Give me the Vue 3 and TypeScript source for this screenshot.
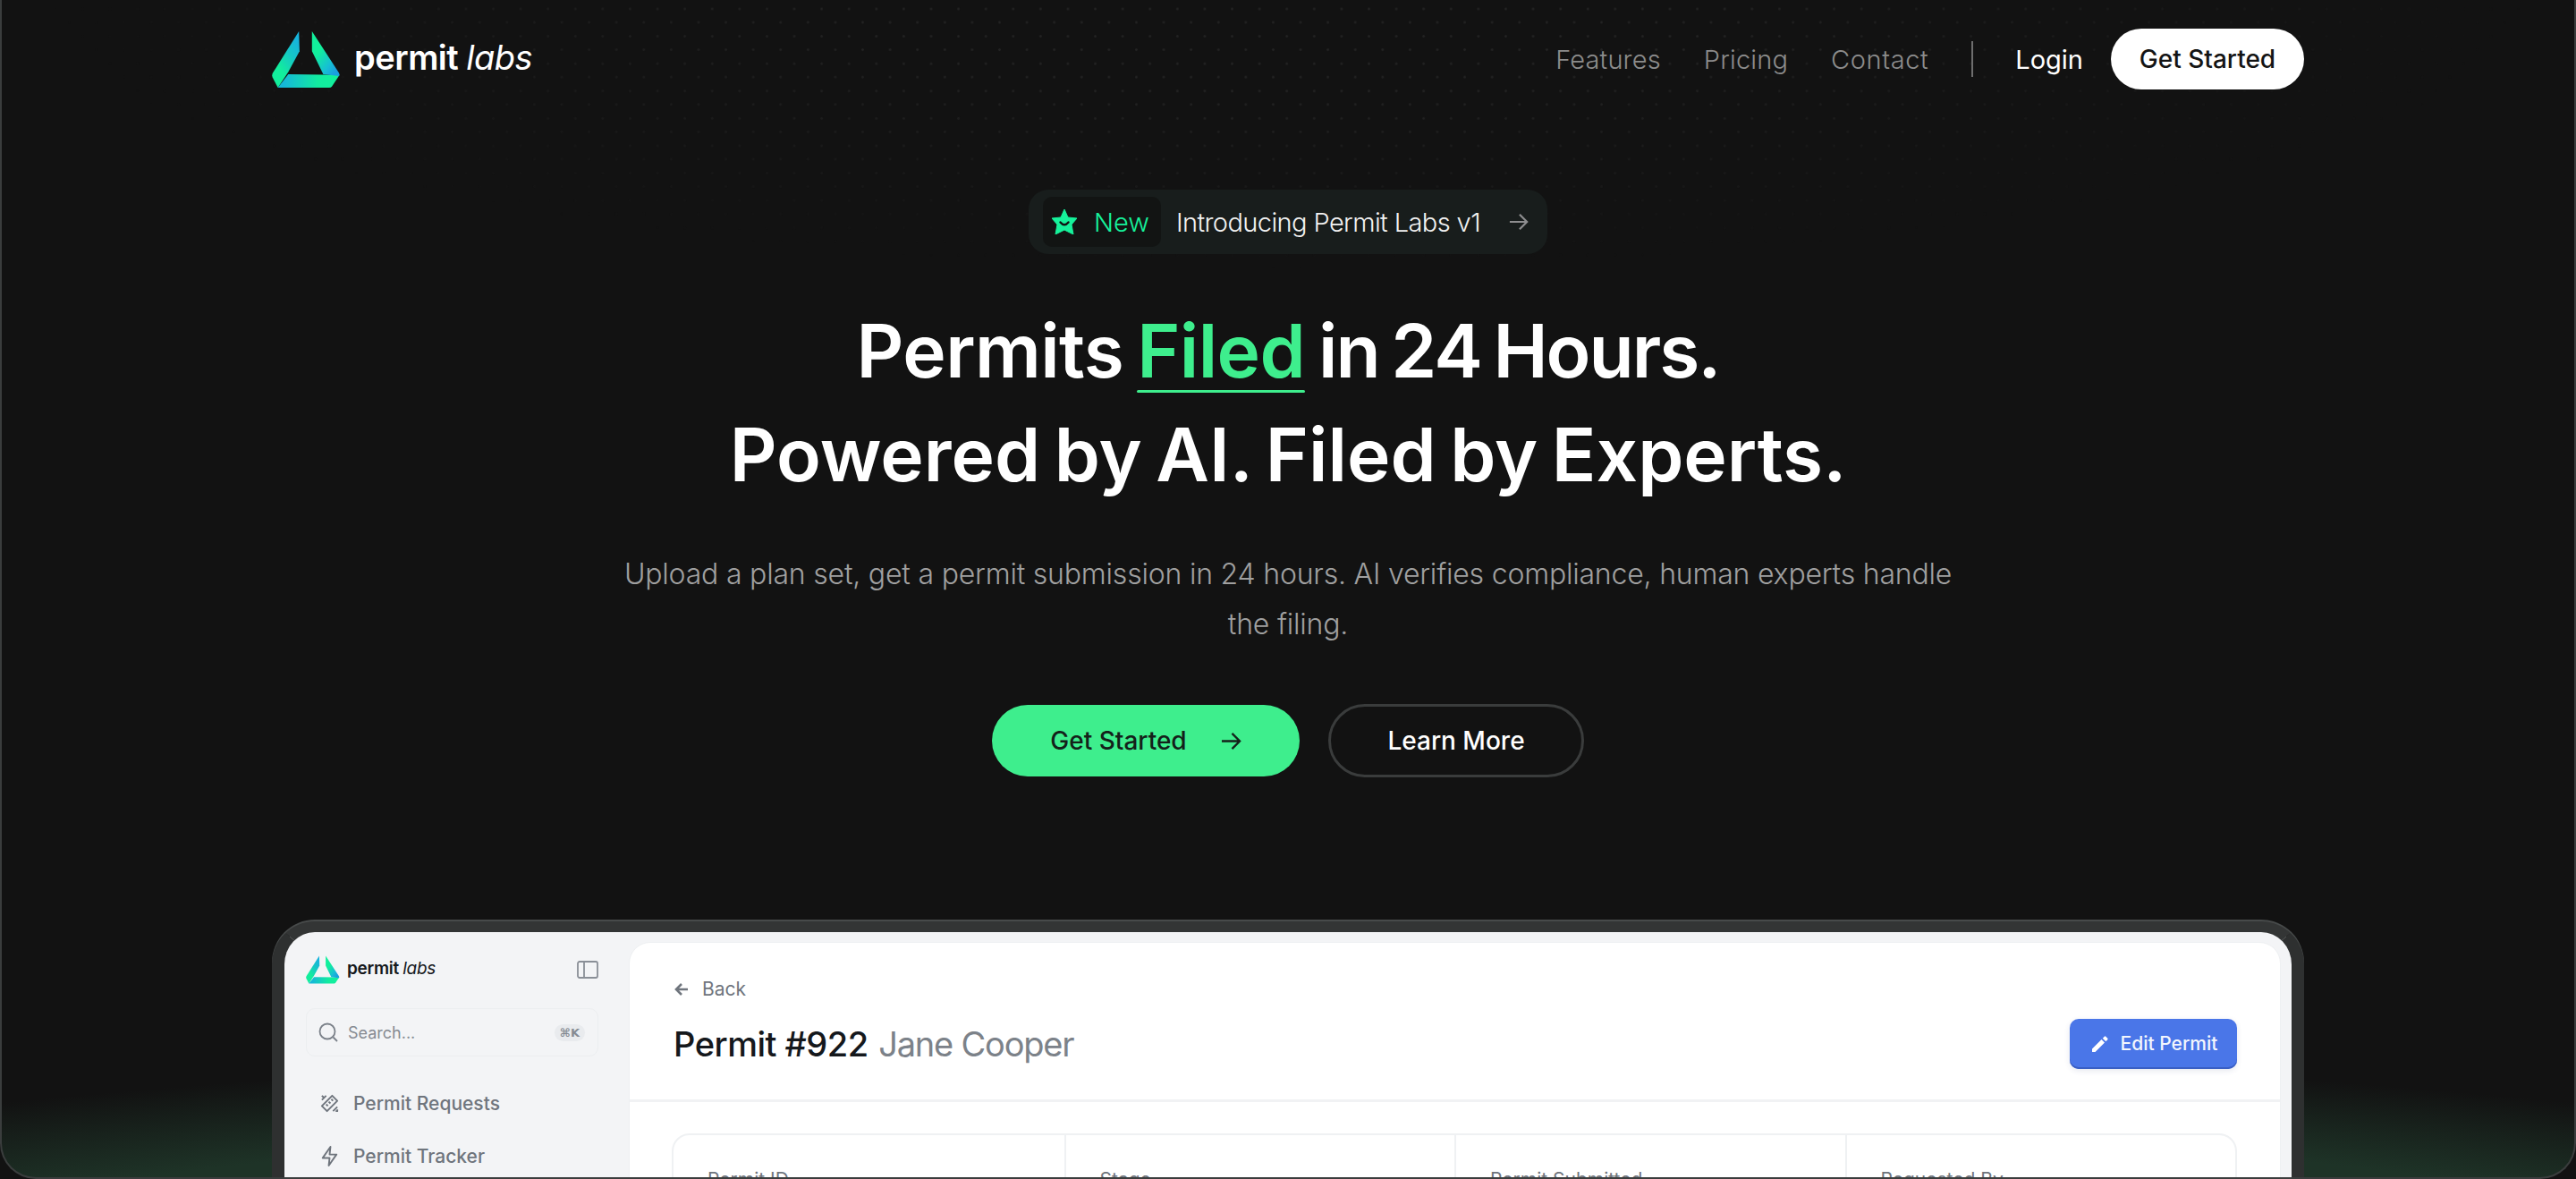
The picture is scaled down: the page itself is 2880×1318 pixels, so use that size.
<script setup lang="ts">
const navLinks = ['Features', 'Pricing', 'Contact'];
const permitFields = ['Permit ID', 'Stage', 'Permit Submitted', 'Requested By'];
</script>

<template>
  <div class="frame">
    <div class="dots"></div>

    <header class="nav">
      <a class="brand">
        <svg class="brand-mark" viewBox="72 100 232 196">
          <defs>
            <linearGradient id="armL" x1="0.75" y1="0.05" x2="0.2" y2="0.85">
              <stop offset="0" stop-color="#17b4dc" />
              <stop offset="0.35" stop-color="#15c6c6" />
              <stop offset="0.8" stop-color="#12ee9c" />
            </linearGradient>
            <linearGradient id="armB" x1="0" y1="0.5" x2="1" y2="0.5">
              <stop offset="0.1" stop-color="#15b8d8" />
              <stop offset="0.65" stop-color="#12ec9f" />
              <stop offset="1" stop-color="#12f09b" />
            </linearGradient>
            <linearGradient id="armR" x1="0.2" y1="0.1" x2="0.85" y2="0.9">
              <stop offset="0.3" stop-color="#12ef9c" />
              <stop offset="0.75" stop-color="#16bfd4" />
              <stop offset="1" stop-color="#1a9fe0" />
            </linearGradient>
          </defs>
          <path d="M163 103 L165 170 L127 240 L92 293 L74 258 Q71 250 75 243 Z" fill="url(#armL)" />
          <path d="M127 248 L300 250 L274 289 Q271 293 265 293 L92 293 Z" fill="url(#armB)" />
          <path d="M207 103 L298 243 Q302 249 298 254 L245 248 L207 170 Z" fill="url(#armR)" />
        </svg>
        <span class="brand-text">permit <em>labs</em></span>
      </a>

      <nav class="nav-right">
        <a v-for="link in navLinks" :key="link" class="nav-link">{{ link }}</a>
        <span class="nav-divider"></span>
        <a class="nav-login">Login</a>
        <a class="nav-cta">Get Started</a>
      </nav>
    </header>

    <section class="hero">
      <div class="announce">
        <span class="announce-tag">
          <svg class="star" viewBox="0 0 28 28">
            <path d="M14 0 L18 9 L28 10 L22 17 L24 28 L14 23 L4 28 L6 17 L0 10 L10 9 Z" fill="#16f29b" stroke="#16f29b" stroke-width="1" stroke-linejoin="round" />
            <path d="M9.5 14.5 Q14 20 18.5 14.5" fill="none" stroke="#101312" stroke-width="2.4" stroke-linecap="round" />
          </svg>
          New
        </span>
        <span class="announce-text">Introducing Permit Labs v1</span>
        <svg class="announce-arrow" viewBox="0 0 24 24">
          <path d="M1 12 H22 M13 3 L22 12 L13 21" />
        </svg>
      </div>

      <h1 class="title">
        Permits <span class="filed">Filed</span> <span class="tight">in 24 Hours.</span><br />
        <span class="wide">Powered by AI. Filed by Experts.</span>
      </h1>

      <p class="lead">
        Upload a plan set, get a permit submission in 24 hours. AI verifies compliance, human experts handle the filing.
      </p>

      <div class="actions">
        <a class="btn btn-green">
          Get Started
          <svg class="btn-arrow" viewBox="0 0 24 24">
            <path d="M1 12 H22 M13 3 L22 12 L13 21" />
          </svg>
        </a>
        <a class="btn btn-outline">Learn More</a>
      </div>
    </section>

    <section class="mock">
      <aside class="side">
        <div class="side-top">
          <div class="side-brand">
            <svg class="side-mark" viewBox="72 100 232 196">
              <path d="M163 103 L165 170 L127 240 L92 293 L74 258 Q71 250 75 243 Z" fill="url(#armL)" />
              <path d="M127 248 L300 250 L274 289 Q271 293 265 293 L92 293 Z" fill="url(#armB)" />
              <path d="M207 103 L298 243 Q302 249 298 254 L245 248 L207 170 Z" fill="url(#armR)" />
            </svg>
            <span class="side-brand-text">permit <em>labs</em></span>
          </div>
          <svg class="panel-icon" viewBox="0 0 24 20">
            <rect x="1" y="1" width="22" height="18" rx="2" />
            <path d="M8 1 V19" />
          </svg>
        </div>

        <div class="search">
          <svg class="search-icon" viewBox="0 0 22 22">
            <circle cx="10" cy="10" r="8.5" />
            <path d="M16.5 16.5 L21 21" />
          </svg>
          <span class="search-text">Search...</span>
          <span class="search-key">⌘K</span>
        </div>

        <a class="side-link">
          <svg class="side-icon" viewBox="0 0 24 24">
            <path d="M3 15 L15 3 L21 9 L9 21 Z M8 13 L10 15 M11 10 L13 12 M14 7 L16 9" />
            <path d="M3 8 L8 3 M3 3 L5 5 M16 21 L21 16 M19 21 H21 V19" />
          </svg>
          Permit Requests
        </a>
        <a class="side-link">
          <svg class="side-icon" viewBox="0 0 24 24">
            <path d="M13 1 L4 14 H12 L11 23 L20 10 H12 Z" />
          </svg>
          Permit Tracker
        </a>
      </aside>

      <main class="panel">
        <div class="panel-head">
          <div>
            <a class="back">
              <svg class="back-icon" viewBox="0 0 18 18">
                <path d="M16 9 H3 M9 3 L3 9 L9 15" />
              </svg>
              Back
            </a>
            <h2 class="permit-title">Permit #922 <span>Jane Cooper</span></h2>
          </div>
          <a class="edit-btn">
            <svg class="edit-icon" viewBox="0 0 24 24">
              <path d="M3 17.5 V21 H6.5 L17 10.5 L13.5 7 Z M14.8 5.7 L18.3 9.2 L20.3 7.2 Q21 6.5 20.3 5.7 L18.3 3.7 Q17.5 3 16.8 3.7 Z" />
            </svg>
            Edit Permit
          </a>
        </div>

        <div class="panel-body">
          <div class="fields">
            <div v-for="field in permitFields" :key="field" class="field">{{ field }}</div>
          </div>
        </div>
      </main>
    </section>
  </div>
</template>

<style>
html,
body {
  margin: 0;
  background: #121212;
}
</style>

<style scoped>
.frame {
  position: relative;
  box-sizing: border-box;
  height: 1318px;
  overflow: hidden;
  border: solid #3a3d3d;
  border-width: 0 2px 2px;
  border-radius: 0 0 40px 40px;
  font-family: Inter, "Liberation Sans", sans-serif;
  background: radial-gradient(2400px 320px at 1438px 1489px, #1e3327 76%, #121212 100%);
}

.dots {
  position: absolute;
  inset: 0 0 auto;
  height: 320px;
  background-image:
    radial-gradient(circle, #222 1.1px, transparent 1.7px),
    radial-gradient(circle, #222 1.1px, transparent 1.7px);
  background-size: 30.6px 30.6px;
  background-position: -16.5px -5.3px, -1.2px 9.7px;
  -webkit-mask-image: radial-gradient(1380px 300px at 50% 0, #000 35%, transparent 100%);
  mask-image: radial-gradient(1380px 300px at 50% 0, #000 35%, transparent 100%);
}

a {
  text-decoration: none;
}

.nav {
  position: relative;
  display: flex;
  align-items: center;
  justify-content: space-between;
  width: 2272px;
  margin: 0 auto;
  padding-top: 32px;
}

.brand {
  display: flex;
  align-items: center;
  gap: 15px;
}

.brand-mark {
  width: 77px;
  height: 65px;
}

.brand-text {
  margin-top: -4px;
  font-size: 38px;
  font-weight: 600;
  letter-spacing: -0.5px;
  color: #fff;
}

.brand-text em {
  font-weight: 400;
}

.nav-right {
  display: flex;
  align-items: center;
}

.nav-link {
  margin-right: 48px;
  font-size: 29px;
  font-weight: 300;
  letter-spacing: 0.15px;
  color: #8c8c8c;
}

.nav-link:nth-child(3) {
  letter-spacing: 0.6px;
}

.nav-divider {
  width: 2px;
  height: 40px;
  margin-right: 47px;
  background: #6e6e6e;
}

.nav-login {
  margin-right: 31px;
  font-size: 29px;
  font-weight: 400;
  color: #fff;
}

.nav-cta {
  display: flex;
  align-items: center;
  justify-content: center;
  width: 216px;
  height: 68px;
  border-radius: 34px;
  background: #fff;
  font-size: 28px;
  font-weight: 500;
  color: #141414;
}

.hero {
  position: relative;
  display: flex;
  flex-direction: column;
  align-items: center;
}

.announce {
  display: flex;
  align-items: center;
  box-sizing: border-box;
  width: 580px;
  height: 72px;
  margin-top: 112px;
  padding: 0 21px 0 16px;
  border-radius: 22px;
  background: #181d1c;
}

.announce-tag {
  display: flex;
  align-items: center;
  gap: 19px;
  box-sizing: border-box;
  width: 132px;
  height: 56px;
  padding-left: 10px;
  border-radius: 10px;
  background: #121413;
  font-size: 29px;
  font-weight: 300;
  color: #16f29b;
}

.star {
  width: 28px;
  height: 28px;
}

.announce-text {
  margin-left: 17px;
  font-size: 29px;
  font-weight: 300;
  letter-spacing: -0.6px;
  color: #f2f2f2;
  white-space: nowrap;
}

.announce-arrow {
  width: 22px;
  height: 22px;
  margin-left: auto;
  fill: none;
  stroke: #8d8d8f;
  stroke-width: 2.4;
}

.title {
  margin: 51px 0 0;
  font-size: 82px;
  font-weight: 600;
  line-height: 116px;
  letter-spacing: -0.6px;
  word-spacing: -5px;
  text-align: center;
  color: #fff;
}

.tight {
  letter-spacing: -2px;
}

.wide {
  letter-spacing: 0;
}

.filed {
  position: relative;
  color: #3eee8d;
}

.filed::after {
  content: "";
  position: absolute;
  left: 0;
  right: 0;
  bottom: 3px;
  height: 3px;
  border-radius: 2px;
  background: #3eee8d;
}

.lead {
  width: 1510px;
  margin: 47px 0 0;
  font-size: 32px;
  font-weight: 300;
  line-height: 56px;
  letter-spacing: -0.2px;
  text-align: center;
  color: #a0a0a0;
}

.actions {
  display: flex;
  gap: 32px;
  margin-top: 62px;
}

.btn {
  display: flex;
  align-items: center;
  justify-content: center;
  box-sizing: border-box;
  height: 80px;
  border-radius: 40px;
  font-size: 28px;
  font-weight: 500;
}

.btn-green {
  gap: 38px;
  width: 344px;
  background: #3eee8d;
  color: #14211a;
}

.btn-arrow {
  width: 23px;
  height: 23px;
  fill: none;
  stroke: #14211a;
  stroke-width: 2.4;
}

.btn-outline {
  width: 286px;
  height: 82px;
  margin-top: -1px;
  border: 3px solid #3a3c3c;
  border-radius: 41px;
  color: #fff;
}

.mock {
  position: relative;
  display: flex;
  box-sizing: border-box;
  width: 2272px;
  height: 400px;
  margin: 161px auto 0;
  border: 14px solid #2e3030;
  border-top-width: 12px;
  border-top-color: #333535;
  border-radius: 48px 48px 0 0;
  background: #f3f4f6;
  box-shadow: 0 -2px 0 #474a4a;
}

.side {
  flex: 0 0 385px;
  box-sizing: border-box;
  padding: 26px 24px 0 24px;
}

.side-top {
  display: flex;
  align-items: center;
  justify-content: space-between;
}

.side-brand {
  display: flex;
  align-items: center;
  gap: 8px;
}

.side-mark {
  width: 38px;
  height: 32px;
}

.side-brand-text {
  margin-top: -3px;
  font-size: 19px;
  font-weight: 600;
  letter-spacing: -0.3px;
  color: #15181c;
}

.side-brand-text em {
  font-weight: 400;
}

.panel-icon {
  width: 24px;
  height: 20px;
  margin-right: 10px;
  fill: none;
  stroke: #8a8f97;
  stroke-width: 1.8;
}

.search {
  display: flex;
  align-items: center;
  box-sizing: border-box;
  width: 327px;
  height: 54px;
  margin-top: 27px;
  padding: 0 14px 0 13px;
  border: 1px solid #eceef0;
  border-radius: 10px;
}

.search-icon {
  width: 22px;
  height: 22px;
  fill: none;
  stroke: #7b8189;
  stroke-width: 1.8;
}

.search-text {
  margin-left: 11px;
  font-size: 18px;
  color: #868b93;
}

.search-key {
  margin-left: auto;
  padding: 2px 6px;
  border-radius: 10px;
  background: #e9ebee;
  font-family: "DejaVu Sans", sans-serif;
  font-size: 13px;
  font-weight: 700;
  color: #868b93;
}

.side-link {
  display: flex;
  align-items: center;
  gap: 15px;
  height: 32px;
  margin: 36px 0 0 15px;
  font-size: 21px;
  font-weight: 500;
  color: #6f757d;
}

.side-link + .side-link {
  margin-top: 27px;
}

.side-icon {
  width: 23px;
  height: 23px;
  fill: none;
  stroke: #6f757d;
  stroke-width: 2;
  stroke-linejoin: round;
}

.panel {
  flex: 1;
  margin: 11px 12px 0 0;
  border: 1px solid #eef0f2;
  border-radius: 24px 24px 0 0;
  background: #fff;
}

.panel-head {
  display: flex;
  align-items: center;
  justify-content: space-between;
  box-sizing: border-box;
  height: 178px;
  padding: 0 48px 0 49px;
  border-bottom: 3px solid #f1f2f4;
}

.back {
  display: flex;
  align-items: center;
  gap: 14px;
  padding-bottom: 26px;
  font-size: 21px;
  color: #6f757d;
}

.back-icon {
  width: 18px;
  height: 18px;
  fill: none;
  stroke: #6f757d;
  stroke-width: 2.6;
}

.permit-title {
  margin: 0;
  font-size: 38px;
  font-weight: 500;
  letter-spacing: -0.5px;
  color: #15181c;
}

.permit-title span {
  margin-left: 2px;
  font-weight: 400;
  letter-spacing: -1.2px;
  color: #7c8289;
}

.edit-btn {
  display: flex;
  align-items: center;
  justify-content: center;
  gap: 11px;
  box-sizing: border-box;
  width: 187px;
  height: 56px;
  margin-top: 50px;
  border-radius: 10px;
  background: #4a76e8;
  box-shadow: inset 0 -2px 0 #3a5fc4, 0 2px 6px rgba(40, 60, 120, 0.12);
  font-size: 21px;
  font-weight: 500;
  color: #f3f6fd;
}

.edit-icon {
  width: 24px;
  height: 24px;
  fill: #fff;
}

.panel-body {
  padding: 35px 48px 0 47px;
}

.fields {
  display: grid;
  grid-template-columns: repeat(4, 1fr);
  height: 200px;
  border: 2px solid #eff1f3;
  border-radius: 20px;
}

.field {
  padding: 37px 38px 0;
  border-left: 2px solid #eff1f3;
  font-size: 21px;
  color: #6f757d;
}

.field:first-child {
  border-left: 0;
}
</style>
